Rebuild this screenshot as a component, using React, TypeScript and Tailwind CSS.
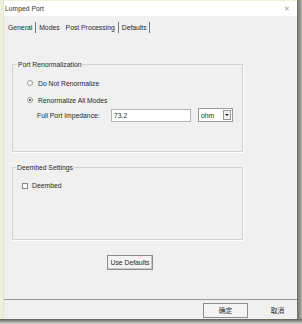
import React from 'react';

const font = { fontFamily: '"Liberation Sans", Arial, "Noto Sans CJK SC", sans-serif' };

const Radio: React.FC<{ checked?: boolean; label: string }> = ({ checked, label }) => (
    <div className="flex items-center h-[10px]">
        <div className="w-[6px] h-[6px] rounded-full border border-[#9a9a9a] bg-white flex items-center justify-center">
            {checked && <div className="w-[2px] h-[2px] rounded-full bg-[#333]"></div>}
        </div>
        <span className="ml-[5px]">{label}</span>
    </div>
);

const App: React.FC = () => {
    return (
        <div className="w-[302px] h-[324px] flex flex-col bg-[#c8c8c0] text-[6.8px] leading-[9px] text-[#2a2a2a]" style={font}>
            <div className="flex h-[319px]">
                {/* left frame strip */}
                <div className="w-[4px] bg-[#eef1da] border-r border-[#e2e6cc]"></div>

                <div className="w-[293px] flex flex-col bg-[#f0f0f0]">
                    {/* title bar */}
                    <div className="h-[16px] bg-white border-t border-[#f3f3d6] flex items-center justify-between pl-[1px] pr-[7px]">
                        <span className="text-[#333]">Lumped Port</span>
                        <span className="text-[7px] text-[#999]">✕</span>
                    </div>

                    {/* tabs */}
                    <div className="flex items-center h-[12px] mt-[5px] pl-[4px]">
                        <span>General</span>
                        <div className="w-[1px] h-[11px] bg-[#777] ml-[3px] mr-[3px]"></div>
                        <span>Modes</span>
                        <span className="ml-[6px]">Post Processing</span>
                        <div className="w-[1px] h-[11px] bg-[#777] ml-[3px] mr-[3px]"></div>
                        <span>Defaults</span>
                        <div className="w-[1px] h-[11px] bg-[#777] ml-[2px]"></div>
                    </div>

                    {/* Port Renormalization */}
                    <fieldset className="ml-[8px] w-[231px] h-[92px] mt-[27px] border border-[#d2d2d2] shadow-[1px_1px_0_#fff] px-0">
                        <legend className="ml-[4px] px-[1px]">Port Renormalization</legend>
                        <div className="pl-[14px]">
                            <div className="mt-[9px]">
                                <Radio label="Do Not Renormalize" />
                            </div>
                            <div className="mt-[7px]">
                                <Radio checked label="Renormalize All Modes" />
                            </div>
                            <div className="flex items-center mt-[3px] ml-[10px]">
                                <span className="w-[74px]">Full Port Impedance:</span>
                                <div className="w-[80px] h-[13px] bg-white border border-[#b5b5b5] flex items-center px-[2px]">73.2</div>
                                <div className="ml-[7px] w-[35px] h-[14px] bg-white border border-[#9a9a9a] flex items-center justify-between pl-[2px] pr-[1px]">
                                    <span>ohm</span>
                                    <div className="w-[8px] h-[10px] bg-[#f0f0f0] border border-[#9a9a9a] flex items-center justify-center">
                                        <div className="w-0 h-0 border-l-[2px] border-r-[2px] border-t-[2px] border-l-transparent border-r-transparent border-t-[#222]"></div>
                                    </div>
                                </div>
                            </div>
                        </div>
                    </fieldset>

                    {/* Deembed Settings */}
                    <fieldset className="ml-[8px] w-[231px] h-[77px] mt-[11px] border border-[#d2d2d2] shadow-[1px_1px_0_#fff] px-0">
                        <legend className="ml-[3px] px-[1px]">Deembed Settings</legend>
                        <div className="flex items-center mt-[9px] pl-[9px]">
                            <div className="w-[6px] h-[6px] bg-white border border-[#8a8a8a]"></div>
                            <span className="ml-[4px]">Deembed</span>
                        </div>
                    </fieldset>

                    <div className="ml-[103px] mt-[15px] w-[46px] h-[15px] border border-[#8c8c8c] bg-[#f4f4f4] shadow-[inset_-1px_-1px_0_#c8c8c8] flex items-center justify-center">
                        Use Defaults
                    </div>

                    <div className="mt-[29px] h-[1px] bg-[#9a9a9a]"></div>
                    <div className="flex mt-[3px] pl-[199px]">
                        <div className="w-[46px] h-[15px] border border-[#8c8c8c] bg-[#f4f4f4] flex items-center justify-center">确定</div>
                        <div className="ml-[10px] w-[40px] h-[15px] flex items-center justify-center">取消</div>
                    </div>
                </div>

                {/* right shadow */}
                <div className="w-[5px] bg-gradient-to-r from-[#6c6c64] to-[#b4b4ac]"></div>
            </div>
            <div className="h-[5px] bg-gradient-to-b from-[#5e5e58] to-[#dcdcd4]"></div>
        </div>
    );
};

export default App;
